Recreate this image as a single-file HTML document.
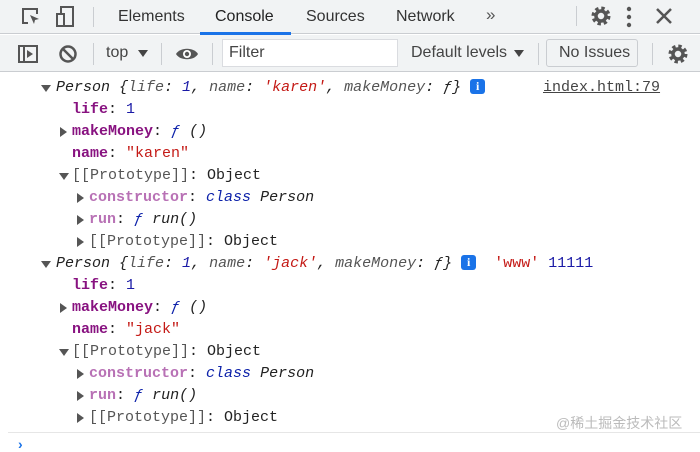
<!DOCTYPE html>
<html><head><meta charset="utf-8"><style>
*{margin:0;padding:0;box-sizing:border-box}
body{width:700px;height:446px;overflow:hidden;background:#fff;font-family:"Liberation Sans",sans-serif;position:relative}
.tb{position:absolute;left:0;top:0;width:700px;height:34px;background:#f1f3f4;border-bottom:1px solid #cacdd1}
.tb2{position:absolute;left:0;top:35px;width:700px;height:37px;background:#f1f3f4;border-bottom:1px solid #cacdd1}
.t{position:absolute;font-size:16px;color:#333}
.sep{position:absolute;width:1px;background:#cacdd1}
.l{position:absolute;font-family:"Liberation Mono",monospace;font-size:15px;white-space:pre;line-height:22px;color:#222}
.tri{position:absolute;width:0;height:0}
.dn{border-left:5px solid transparent;border-right:5px solid transparent;border-top:7px solid #555}
.rt{border-top:5px solid transparent;border-bottom:5px solid transparent;border-left:7px solid #555}
i{font-style:italic}
.k{color:#881280;font-weight:bold}
.kp{color:#b871b5;font-weight:bold}
.n{color:#1a1aa6}
.s{color:#c41a16}
.g{color:#555}
.b{color:#0d22aa}
.info{display:inline-block;width:15px;height:15px;background:#1a73e8;border-radius:3px;color:#fff;font-size:12px;line-height:15px;text-align:center;font-family:"Liberation Serif",serif;font-weight:bold;vertical-align:1px}
</style></head><body>
<svg width="0" height="0" style="position:absolute"><defs><g id="gear"><circle cx="11" cy="11" r="7.5" fill="none" stroke="#555" stroke-width="4" stroke-dasharray="3.2 2.7"/><circle cx="11" cy="11" r="5" fill="none" stroke="#555" stroke-width="3.5"/></g></defs></svg>
<div class="tb"></div>
<svg style="position:absolute;left:20px;top:6px" width="22" height="22" viewBox="0 0 22 22"><path d="M8 17H3V3h14v5" fill="none" stroke="#555" stroke-width="2"/><path d="M10 9l9 4-4 1-1 4z" fill="#555"/></svg>
<svg style="position:absolute;left:54px;top:5px" width="24" height="24" viewBox="0 0 24 24"><rect x="7" y="2" width="12" height="19" fill="none" stroke="#555" stroke-width="2"/><rect x="3" y="9" width="7" height="12" fill="#f1f3f4" stroke="#555" stroke-width="2"/></svg>
<div class="sep" style="left:93px;top:7px;height:20px"></div>
<div class="t" style="left:118px;top:8px">Elements</div>
<div class="t" style="left:215px;top:8px;color:#222">Console</div>
<div style="position:absolute;left:200px;top:32px;width:91px;height:3px;background:#1a73e8"></div>
<div class="t" style="left:306px;top:8px">Sources</div>
<div class="t" style="left:396px;top:8px">Network</div>
<div class="t" style="left:486px;top:5px;font-size:17px;color:#555">»</div>
<div class="sep" style="left:576px;top:6px;height:20px"></div>
<svg style="position:absolute;left:590px;top:5px" width="22" height="22"><use href="#gear"/></svg>
<svg style="position:absolute;left:626px;top:6px" width="6" height="22"><circle cx="3" cy="3" r="2.2" fill="#555"/><circle cx="3" cy="11" r="2.2" fill="#555"/><circle cx="3" cy="19" r="2.2" fill="#555"/></svg>
<svg style="position:absolute;left:655px;top:7px" width="18" height="18"><path d="M2 2L16 16M16 2L2 16" stroke="#555" stroke-width="2.5"/></svg>
<div class="tb2"></div>
<svg style="position:absolute;left:18px;top:45px" width="20" height="18" viewBox="0 0 20 18"><rect x="1" y="1" width="18" height="16" fill="none" stroke="#555" stroke-width="2"/><line x1="6" y1="1" x2="6" y2="17" stroke="#555" stroke-width="2"/><path d="M9 5l6 4-6 4z" fill="#555"/></svg>
<svg style="position:absolute;left:58px;top:44px" width="20" height="20" viewBox="0 0 20 20"><circle cx="10" cy="10" r="7.5" fill="none" stroke="#555" stroke-width="2.5"/><line x1="5" y1="5" x2="15" y2="15" stroke="#555" stroke-width="2.5"/></svg>
<div class="sep" style="left:93px;top:43px;height:22px"></div>
<div class="t" style="left:106px;top:44px;color:#444">top</div>
<div class="tri dn" style="left:138px;top:50px;border-top-color:#444"></div>
<div class="sep" style="left:161px;top:43px;height:22px"></div>
<svg style="position:absolute;left:175px;top:45px" width="24" height="18" viewBox="0 0 24 18"><path d="M1 9C5 2 19 2 23 9C19 16 5 16 1 9z" fill="#555"/><circle cx="12" cy="9" r="4" fill="#fff"/><circle cx="12" cy="9" r="2.2" fill="#555"/></svg>
<div class="sep" style="left:212px;top:43px;height:22px"></div>
<div style="position:absolute;left:222px;top:39px;width:176px;height:28px;background:#fff;border:1px solid #dadce0"></div>
<div class="t" style="left:229px;top:44px;color:#444">Filter</div>
<div class="t" style="left:411px;top:44px;color:#444">Default levels</div>
<div class="tri dn" style="left:514px;top:50px;border-top-color:#444"></div>
<div class="sep" style="left:538px;top:43px;height:22px"></div>
<div style="position:absolute;left:546px;top:39px;width:92px;height:28px;border:1px solid #cacdd1;border-radius:3px"></div>
<div class="t" style="left:559px;top:44px;color:#444">No Issues</div>
<div class="sep" style="left:652px;top:43px;height:22px"></div>
<svg style="position:absolute;left:667px;top:43px" width="22" height="22"><use href="#gear"/></svg>

<div class="tri dn" style="left:41px;top:85px"></div>
<div class="l" style="left:56px;top:77px"><i>Person {<span class="g">life</span>: <span class="n">1</span>, <span class="g">name</span>: <span class="s">'karen'</span>, <span class="g">makeMoney</span>: ƒ}</i> <span class="info">i</span></div>
<div class="l" style="left:543px;top:77px;text-decoration:underline;color:#444">index.html:79</div>
<div class="l" style="left:72px;top:99px"><span class="k">life</span>: <span class="n">1</span></div>
<div class="tri rt" style="left:60px;top:127px"></div>
<div class="l" style="left:72px;top:121px"><span class="k">makeMoney</span>: <i class="b">ƒ</i> <i>()</i></div>
<div class="l" style="left:72px;top:143px"><span class="k">name</span>: <span class="s">"karen"</span></div>
<div class="tri dn" style="left:59px;top:173px"></div>
<div class="l" style="left:72px;top:165px"><span class="g">[[Prototype]]</span>: Object</div>
<div class="tri rt" style="left:77px;top:193px"></div>
<div class="l" style="left:89px;top:187px"><span class="kp">constructor</span>: <i class="b">class</i> <i>Person</i></div>
<div class="tri rt" style="left:77px;top:215px"></div>
<div class="l" style="left:89px;top:209px"><span class="kp">run</span>: <i class="b">ƒ</i> <i>run()</i></div>
<div class="tri rt" style="left:77px;top:237px"></div>
<div class="l" style="left:89px;top:231px"><span class="g">[[Prototype]]</span>: Object</div>

<div class="tri dn" style="left:41px;top:261px"></div>
<div class="l" style="left:56px;top:253px"><i>Person {<span class="g">life</span>: <span class="n">1</span>, <span class="g">name</span>: <span class="s">'jack'</span>, <span class="g">makeMoney</span>: ƒ}</i> <span class="info">i</span>  <span class="s">'www'</span> <span class="n">11111</span></div>
<div class="l" style="left:72px;top:275px"><span class="k">life</span>: <span class="n">1</span></div>
<div class="tri rt" style="left:60px;top:303px"></div>
<div class="l" style="left:72px;top:297px"><span class="k">makeMoney</span>: <i class="b">ƒ</i> <i>()</i></div>
<div class="l" style="left:72px;top:319px"><span class="k">name</span>: <span class="s">"jack"</span></div>
<div class="tri dn" style="left:59px;top:349px"></div>
<div class="l" style="left:72px;top:341px"><span class="g">[[Prototype]]</span>: Object</div>
<div class="tri rt" style="left:77px;top:369px"></div>
<div class="l" style="left:89px;top:363px"><span class="kp">constructor</span>: <i class="b">class</i> <i>Person</i></div>
<div class="tri rt" style="left:77px;top:391px"></div>
<div class="l" style="left:89px;top:385px"><span class="kp">run</span>: <i class="b">ƒ</i> <i>run()</i></div>
<div class="tri rt" style="left:77px;top:413px"></div>
<div class="l" style="left:89px;top:407px"><span class="g">[[Prototype]]</span>: Object</div>
<div style="position:absolute;left:556px;top:413px;font-size:14px;color:#bbb;font-family:'Liberation Sans','Noto Sans CJK SC',sans-serif">@稀土掘金技术社区</div>
<div style="position:absolute;left:8px;top:432px;width:692px;height:1px;background:#e6e6e6"></div>
<div style="position:absolute;left:18px;top:436px;color:#1a73e8;font-size:14px;font-weight:bold">›</div>
</body></html>
